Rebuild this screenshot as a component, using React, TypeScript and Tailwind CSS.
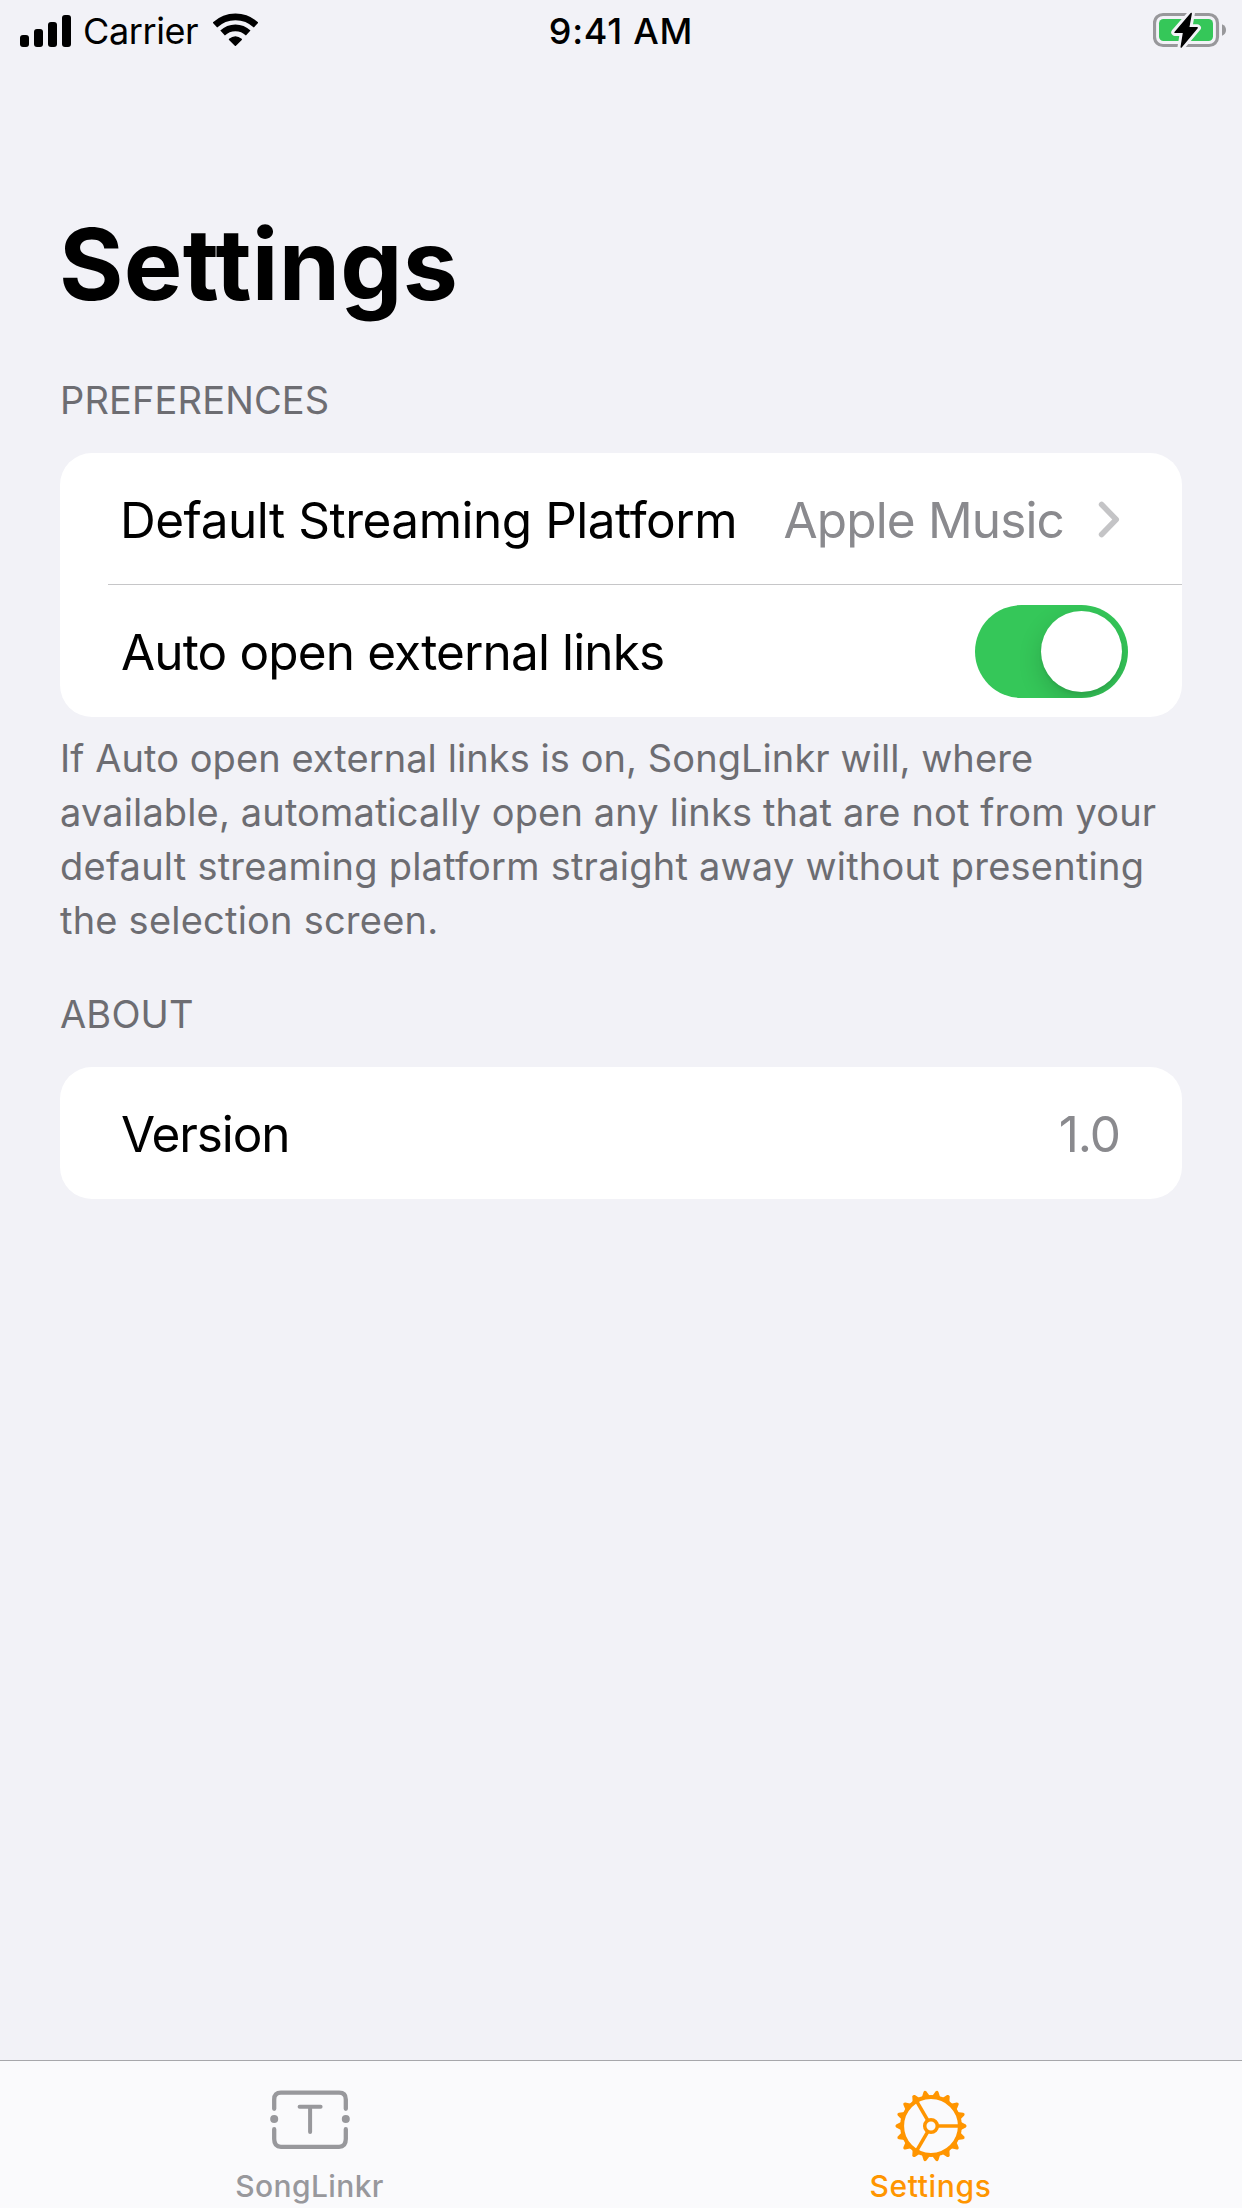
import type { ReactNode } from 'react';

const TEETH = Array.from({ length: 18 }, (_, i) => i * 20);

function SignalBars() {
  return (
    <div className="flex h-8 items-end gap-[5px]">
      <span className="h-3 w-[9px] rounded-[3px] bg-black" />
      <span className="h-[18px] w-[9px] rounded-[3px] bg-black" />
      <span className="h-[25px] w-[9px] rounded-[3px] bg-black" />
      <span className="h-8 w-[9px] rounded-[3px] bg-black" />
    </div>
  );
}

function WifiIcon() {
  return (
    <svg width="45" height="34" viewBox="0 0 45 34" fill="none" stroke="#000" strokeWidth="6.6">
      <path d="M1.8 12.4A29.8 29.8 0 0 1 43 12.4" transform="translate(0.1 -0.3)" />
      <path d="M9.6 20A18.5 18.5 0 0 1 35.2 20" />
      <path d="M22.4 32.2L16.6 26.4Q22.4 21.6 28.2 26.4Z" fill="#000" stroke="#000" strokeWidth="1.6" strokeLinejoin="round" />
    </svg>
  );
}

function BatteryIcon() {
  return (
    <svg width="74" height="38" viewBox="0 0 74 38">
      <rect x="1.5" y="3.5" width="63" height="31" rx="8.5" fill="none" stroke="#98989b" strokeWidth="3.2" />
      <rect x="6" y="8" width="54" height="22" rx="4.5" fill="#35c759" />
      <path d="M69 13.2C74.4 15 74.4 23 69 24.8Z" fill="#98989b" />
      <path
        d="M38.4 2.2L21.8 21.4H30.4L28 36.2L44.4 16.8H35.8Z"
        fill="#f2f2f7"
        stroke="#f2f2f7"
        strokeWidth="7"
        strokeLinejoin="round"
      />
      <path
        d="M38.2 2.5L22 21.4H30.6L28.2 36L44.2 16.8H35.6Z"
        fill="#000"
        stroke="#000"
        strokeWidth="1.4"
        strokeLinejoin="round"
      />
    </svg>
  );
}

function TicketIcon() {
  return (
    <svg width="80" height="60" viewBox="0 0 80 60" fill="none" stroke="#98989c" strokeWidth="4.3" strokeLinecap="round">
      <path d="M4.2 18.8V9.4Q4.2 2.7 10.9 2.7H69.1Q75.8 2.7 75.8 9.4V18.8" />
      <path d="M4.2 39.2V49.1Q4.2 56.8 10.9 56.8H69.1Q75.8 56.8 75.8 49.1V39.2" />
      <circle cx="4.2" cy="29" r="4" fill="#98989c" stroke="none" />
      <circle cx="75.8" cy="29" r="4" fill="#98989c" stroke="none" />
      <path d="M29.6 16.8H50.6M40.1 16.8V42" strokeWidth="4" />
    </svg>
  );
}

function GearIcon() {
  return (
    <svg width="74" height="74" viewBox="-37 -37 74 74" fill="none" stroke="#ff9500" strokeWidth="3.5">
      <circle r="28.9" strokeWidth="4" />
      {TEETH.map((angle) => (
        <path
          key={angle}
          d="M29.5 -4.2L34.8 -1.5Q36.6 0 34.8 1.5L29.5 4.2Z"
          fill="#ff9500"
          stroke="none"
          transform={`rotate(${angle})`}
        />
      ))}
      <circle r="6.3" />
      <path d="M7 0H28" />
      <path d="M7 0H28" transform="rotate(120)" />
      <path d="M7 0H28" transform="rotate(240)" />
    </svg>
  );
}

function SectionHeader({ children }: { children: ReactNode }) {
  return <h2 className="text-[38px] leading-[46px] tracking-[0.15px] text-[#6d6d72]">{children}</h2>;
}

function Toggle() {
  return (
    <button
      type="button"
      role="switch"
      aria-checked="true"
      aria-label="Auto open external links"
      className="flex h-[93px] w-[153px] shrink-0 justify-end overflow-hidden rounded-full bg-[#35c759] p-[6px]"
    >
      <span className="size-[81px] rounded-full bg-white shadow-[0_9px_24px_rgba(0,0,0,0.16),0_3px_3px_rgba(0,0,0,0.06)]" />
    </button>
  );
}

export default function App() {
  return (
    <div className="flex h-[2208px] w-[1242px] flex-col overflow-hidden bg-[#f2f2f7] font-['Inter',sans-serif] text-black">
      <header className="grid h-[62px] grid-cols-3 items-center">
        <div className="flex items-center pl-5">
          <SignalBars />
          <span className="ml-3 text-[36px] leading-[46px] tracking-[-0.4px]">Carrier</span>
          <span className="ml-[15px] -mt-[2px]">
            <WifiIcon />
          </span>
        </div>
        <span className="text-center text-[36px] leading-[46px] font-medium tracking-[0.75px]">9:41 AM</span>
        <div className="-mt-[2px] flex justify-end pr-[15px]">
          <BatteryIcon />
        </div>
      </header>

      <main className="flex-1 px-[60px] pt-[143px]">
        <h1 className="-ml-[1px] text-[98.5px] leading-[120px] font-bold tracking-[0.25px]">Settings</h1>

        <section className="mt-[52px]">
          <SectionHeader>PREFERENCES</SectionHeader>
          <div className="mt-[30px] rounded-[32px] bg-white">
            <div className="flex h-[131px] items-center pr-[62px] pl-[60px] text-[49.5px] leading-[60px]">
              <span className="pt-[3px] tracking-[-0.48px]">Default Streaming Platform</span>
              <span className="ml-auto pt-[3px] tracking-[-0.86px] text-[#8a8a8e]">Apple Music</span>
              <svg className="mt-px ml-[34px]" width="22" height="37" viewBox="0 0 22 37" fill="none">
                <path
                  d="M3.6 3.5L18.2 18.5L3.6 33.5"
                  stroke="#c4c4c6"
                  strokeWidth="5.6"
                  strokeLinecap="round"
                  strokeLinejoin="round"
                />
              </svg>
            </div>
            <div className="ml-12 h-px bg-[#c6c6c8]" />
            <div className="flex h-[132px] items-center justify-between pr-[54px] pl-[61px] text-[49.5px] leading-[60px]">
              <span className="pt-[2px] tracking-[-0.86px]">Auto open external links</span>
              <Toggle />
            </div>
          </div>
          <p className="mt-[14px] text-[38px] leading-[54px] whitespace-nowrap text-[#6d6d72]">
            <span className="block tracking-[0.07px]">If Auto open external links is on, SongLinkr will, where</span>
            <span className="block tracking-[0.14px]">available, automatically open any links that are not from your</span>
            <span className="block tracking-[0.23px]">default streaming platform straight away without presenting</span>
            <span className="block tracking-[0.22px]">the selection screen.</span>
          </p>
        </section>

        <section className="mt-[44px]">
          <SectionHeader>ABOUT</SectionHeader>
          <div className="mt-[30px] flex h-[132px] items-center justify-between rounded-[32px] bg-white pr-[62px] pl-[61px] text-[49.5px] leading-[60px]">
            <span className="pt-px tracking-[-1.1px]">Version</span>
            <span className="pt-px tracking-[-1px] text-[#8a8a8e]">1.0</span>
          </div>
        </section>
      </main>

      <nav className="grid h-[148px] grid-cols-2 border-t border-[#a7a7ab] bg-[#fafafc] text-[30px] leading-[36px] font-medium">
        <a className="flex flex-col items-center pt-[29px] pr-[2px] text-[#98989c]">
          <TicketIcon />
          <span className="mt-[18px] tracking-[0.4px]">SongLinkr</span>
        </a>
        <a className="flex flex-col items-center pt-[28px] pr-[2px] text-[#ff9500]">
          <GearIcon />
          <span className="mt-[5px] tracking-[0.65px]">Settings</span>
        </a>
      </nav>
    </div>
  );
}
